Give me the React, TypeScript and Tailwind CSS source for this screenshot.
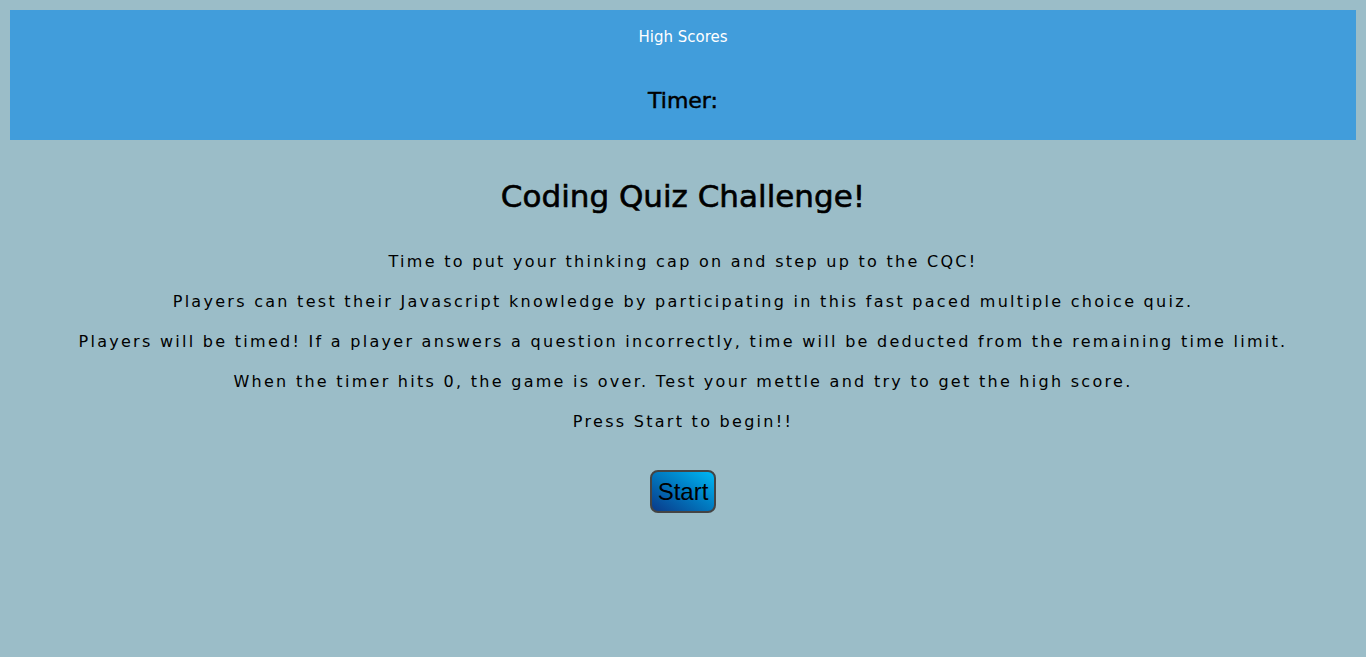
import React from 'react';

const lines = [
  'Time to put your thinking cap on and step up to the CQC!',
  'Players can test their Javascript knowledge by participating in this fast paced multiple choice quiz.',
  'Players will be timed! If a player answers a question incorrectly, time will be deducted from the remaining time limit.',
  'When the timer hits 0, the game is over. Test your mettle and try to get the high score.',
  'Press Start to begin!!',
];

export default function App() {
  return (
    <div className="min-h-[657px] bg-[#9bbdc8] p-[10px] font-['DejaVu_Sans',sans-serif] text-black">
      <header className="flex h-[130px] flex-col items-center bg-[#419ddb]">
        <a className="mt-[18px] text-[15px] leading-[18px] text-white">High Scores</a>
        <h2 className="mt-[42px] text-[22px] leading-[26px] [-webkit-text-stroke:0.5px_black]">Timer:</h2>
      </header>

      <main className="flex flex-col items-center">
        <h1 className="mt-[37px] text-[31px] leading-[38px] [-webkit-text-stroke:0.6px_black]">
          Coding Quiz Challenge!
        </h1>
        <div className="mt-[35px] flex flex-col items-center gap-[16px]">
          {lines.map((line) => (
            <p key={line} className="text-[16px] leading-[24px] tracking-[2.28px]">
              {line}
            </p>
          ))}
        </div>
        <button className="mt-[36px] rounded-[8px] border-2 border-[#444] bg-gradient-to-tr from-[#0a3a8a] to-[#00b8f4] px-[6px] py-[3px] font-['Liberation_Sans',sans-serif] text-[24px] leading-[33px]">
          Start
        </button>
      </main>
    </div>
  );
}
